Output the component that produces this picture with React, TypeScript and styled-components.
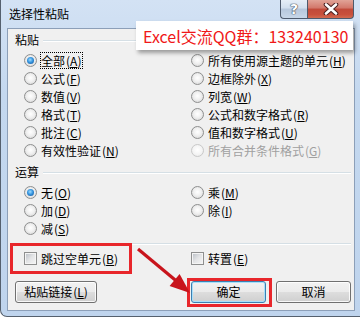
import styled, { createGlobalStyle, css } from "styled-components";

const GlobalStyle = createGlobalStyle`
  html, body {
    margin: 0;
    padding: 0;
    background: #ffffff;
  }
  body {
    font-family: "Noto Sans CJK SC", "Noto Sans", sans-serif;
    font-size: 12px;
    color: #000;
  }
`;

interface Option {
  label: string;
  hotkey: string;
  checked?: boolean;
  disabled?: boolean;
  focused?: boolean;
}

const pasteOptions: Option[] = [
  { label: "全部", hotkey: "A", checked: true, focused: true },
  { label: "所有使用源主题的单元", hotkey: "H" },
  { label: "公式", hotkey: "F" },
  { label: "边框除外", hotkey: "X" },
  { label: "数值", hotkey: "V" },
  { label: "列宽", hotkey: "W" },
  { label: "格式", hotkey: "T" },
  { label: "公式和数字格式", hotkey: "R" },
  { label: "批注", hotkey: "C" },
  { label: "值和数字格式", hotkey: "U" },
  { label: "有效性验证", hotkey: "N" },
  { label: "所有合并条件格式", hotkey: "G", disabled: true },
];

const operationOptions: Option[] = [
  { label: "无", hotkey: "O", checked: true },
  { label: "乘", hotkey: "M" },
  { label: "加", hotkey: "D" },
  { label: "除", hotkey: "I" },
  { label: "减", hotkey: "S" },
];

const Label = ({ option }: { option: Option }) => (
  <LabelText $focused={option.focused} $disabled={option.disabled}>
    {option.label}
    <Hotkey>
      (<u>{option.hotkey}</u>)
    </Hotkey>
  </LabelText>
);

export default function App() {
  return (
    <>
      <GlobalStyle />
      <Window>
        <TitleBar>
          <Title>选择性粘贴</Title>
          <CaptionButtons>
            <HelpButton>?</HelpButton>
            <CloseButton>
              <svg width="16" height="12" viewBox="0 0 16 12">
                <path
                  d="M3 1.5 L13 10.5 M13 1.5 L3 10.5"
                  stroke="#4a2020"
                  strokeWidth="4.6"
                  strokeLinecap="round"
                />
                <path
                  d="M3 1.5 L13 10.5 M13 1.5 L3 10.5"
                  stroke="#ffffff"
                  strokeWidth="2.6"
                  strokeLinecap="round"
                />
              </svg>
            </CloseButton>
          </CaptionButtons>
        </TitleBar>

        <Client>
          <SectionHeader>
            <span>粘贴</span>
            <Rule />
          </SectionHeader>
          <OptionGrid>
            {pasteOptions.map((o) => (
              <OptionRow key={o.hotkey}>
                <Radio $checked={o.checked} $disabled={o.disabled} />
                <Label option={o} />
              </OptionRow>
            ))}
          </OptionGrid>

          <SectionHeader $gap={6}>
            <span>运算</span>
            <Rule />
          </SectionHeader>
          <OptionGrid>
            {operationOptions.map((o) => (
              <OptionRow key={o.hotkey}>
                <Radio $checked={o.checked} />
                <Label option={o} />
              </OptionRow>
            ))}
          </OptionGrid>

          <Separator />

          <CheckGrid>
            <OptionRow>
              <Checkbox />
              <Label option={{ label: "跳过空单元", hotkey: "B" }} />
            </OptionRow>
            <OptionRow>
              <Checkbox />
              <Label option={{ label: "转置", hotkey: "E" }} />
            </OptionRow>
          </CheckGrid>

          <ButtonRow>
            <Button $width={82}>
              粘贴链接
              <Hotkey>
                (<u>L</u>)
              </Hotkey>
            </Button>
            <Button $width={75} $default>
              确定
            </Button>
            <Button $width={75}>取消</Button>
          </ButtonRow>
        </Client>

        <GroupTag>Excel交流QQ群：133240130</GroupTag>
        <Highlight style={{ left: 9, top: 243, width: 122, height: 31 }} />
        <Highlight style={{ left: 186, top: 278, width: 85, height: 29 }} />
        <Arrow width="360" height="318" viewBox="0 0 360 318">
          <line x1="138" y1="249" x2="177" y2="281.5" stroke="#c8141c" strokeWidth="3.2" />
          <polygon points="190,293 169.6,286 179.6,274" fill="#c8141c" />
        </Arrow>
      </Window>
    </>
  );
}

const Window = styled.div`
  position: relative;
  box-sizing: border-box;
  width: 360px;
  height: 317px;
  display: flex;
  flex-direction: column;
  border-left: 1px solid #55606e;
  border-bottom: 1px solid #55606e;
  border-bottom-left-radius: 7px;
  background: linear-gradient(180deg, #d3e2f4 0%, #c4d8ef 30%, #bfd4ed 100%);
  overflow: hidden;
`;

const TitleBar = styled.div`
  height: 28px;
  flex: none;
  display: flex;
  align-items: flex-start;
  justify-content: space-between;
`;

const Title = styled.div`
  margin: 7px 0 0 8px;
  font-size: 12px;
  line-height: 14px;
  color: #000;
`;

const CaptionButtons = styled.div`
  display: flex;
  margin-right: 6px;
`;

const captionBase = css`
  box-sizing: border-box;
  height: 19px;
  display: flex;
  align-items: center;
  justify-content: center;
  border: 1px solid #4e5a6c;
  border-top: none;
`;

const HelpButton = styled.div`
  ${captionBase};
  width: 27px;
  border-right: none;
  border-bottom-left-radius: 4px;
  background: linear-gradient(180deg, #e6eef7 0%, #d2dfee 45%, #b6c7dc 50%, #c8d7e8 100%);
  color: #fff;
  font-family: "DejaVu Sans", sans-serif;
  font-weight: bold;
  font-size: 14px;
  text-shadow: 0 0 1px #3a4250, 0 0 1px #3a4250, 0 0 1px #3a4250;
`;

const CloseButton = styled.div`
  ${captionBase};
  width: 47px;
  border-bottom-right-radius: 4px;
  background: linear-gradient(180deg, #e1a397 0%, #d2776a 45%, #c14a3a 50%, #c8503c 80%, #d26a50 100%);
`;

const Client = styled.div`
  flex: 1;
  margin: 0 5px 5px 6px;
  box-sizing: border-box;
  border: 1px solid #8c9fb8;
  background: #f0f0f0;
  padding: 4px 3px 0 7px;
  display: flex;
  flex-direction: column;
`;

const SectionHeader = styled.div<{ $gap?: number }>`
  display: flex;
  align-items: center;
  gap: 4px;
  height: 14px;
  line-height: 14px;
  margin-top: ${(p) => p.$gap ?? 0}px;
`;

const Rule = styled.div`
  flex: 1;
  height: 1px;
  background: #d5dfe5;
  box-shadow: 0 1px 0 #ffffff;
`;

const OptionGrid = styled.div`
  display: grid;
  grid-template-columns: 167px 1fr;
  grid-auto-rows: 18px;
  margin: 4px 0 0 9px;
`;

const CheckGrid = styled(OptionGrid)`
  margin-top: 5px;
`;

const OptionRow = styled.div`
  display: flex;
  align-items: center;
  gap: 3px;
`;

const Radio = styled.span<{ $checked?: boolean; $disabled?: boolean }>`
  position: relative;
  flex: none;
  box-sizing: border-box;
  width: 13px;
  height: 13px;
  border-radius: 50%;
  border: 1px solid ${(p) => (p.$disabled ? "#c9c9c9" : "#8e8f8f")};
  background: ${(p) =>
    p.$disabled
      ? "radial-gradient(circle at 50% 45%, #ffffff 0%, #f4f4f4 55%, #e4e4e4 100%)"
      : "radial-gradient(circle at 50% 45%, #ffffff 0%, #f0f0f0 45%, #cfcfcf 100%)"};
  ${(p) =>
    p.$checked &&
    css`
      &::after {
        content: "";
        position: absolute;
        left: 2px;
        top: 2px;
        width: 7px;
        height: 7px;
        border-radius: 50%;
        background: radial-gradient(circle at 45% 40%, #9fdcff 0%, #3796e0 45%, #0b4a8e 100%);
      }
    `}
`;

const Checkbox = styled.span`
  flex: none;
  box-sizing: border-box;
  width: 13px;
  height: 13px;
  border: 1px solid #8e8f8f;
  background: linear-gradient(135deg, #b7bcc3 0%, #e3e4e6 50%, #f6f6f6 100%);
  box-shadow: inset 0 0 0 1px #f4f4f4;
`;

const LabelText = styled.span<{ $focused?: boolean; $disabled?: boolean }>`
  box-sizing: border-box;
  height: 17px;
  line-height: 15px;
  padding: 0 1px 0 0;
  border: 1px ${(p) => (p.$focused ? "dotted #000" : "solid transparent")};
  white-space: nowrap;
  color: ${(p) => (p.$disabled ? "#a0a0a0" : "#000")};
`;

const Hotkey = styled.span`
  margin-left: 1px;
  u {
    text-decoration-thickness: 1px;
    text-underline-offset: 1px;
  }
`;

const Separator = styled.div`
  height: 1px;
  margin-top: 6px;
  background: #d5dfe5;
  box-shadow: 0 1px 0 #ffffff;
`;

const ButtonRow = styled.div`
  display: flex;
  align-items: center;
  gap: 10px;
  margin-top: 14px;
  & > :nth-child(2) {
    margin-left: auto;
  }
`;

const Button = styled.button<{ $width: number; $default?: boolean }>`
  box-sizing: border-box;
  width: ${(p) => p.$width}px;
  height: 22px;
  padding: 0;
  font-family: "Noto Sans CJK SC", sans-serif;
  font-size: 12px;
  line-height: 18px;
  color: #000;
  border-radius: 3px;
  border: 1px solid ${(p) => (p.$default ? "#3c7fb1" : "#707070")};
  background: linear-gradient(180deg, #f2f2f2 0%, #ebebeb 48%, #dddddd 52%, #cfcfcf 100%);
  box-shadow: inset 0 0 0 1px ${(p) => (p.$default ? "#a8e0fb" : "rgba(255,255,255,0.85)")};
`;

const GroupTag = styled.div`
  position: absolute;
  left: 135px;
  top: 21px;
  width: 217px;
  height: 29px;
  box-sizing: border-box;
  padding-left: 7px;
  display: flex;
  align-items: center;
  background: #ffffff;
  box-shadow: 2px 3px 4px rgba(0, 0, 0, 0.35);
  color: #f01818;
  font-family: "Noto Sans CJK SC", sans-serif;
  font-size: 16px;
  white-space: nowrap;
`;

const Highlight = styled.div`
  position: absolute;
  box-sizing: border-box;
  border: 3px solid #e8262b;
  pointer-events: none;
`;

const Arrow = styled.svg`
  position: absolute;
  left: -1px;
  top: 0;
  pointer-events: none;
`;
